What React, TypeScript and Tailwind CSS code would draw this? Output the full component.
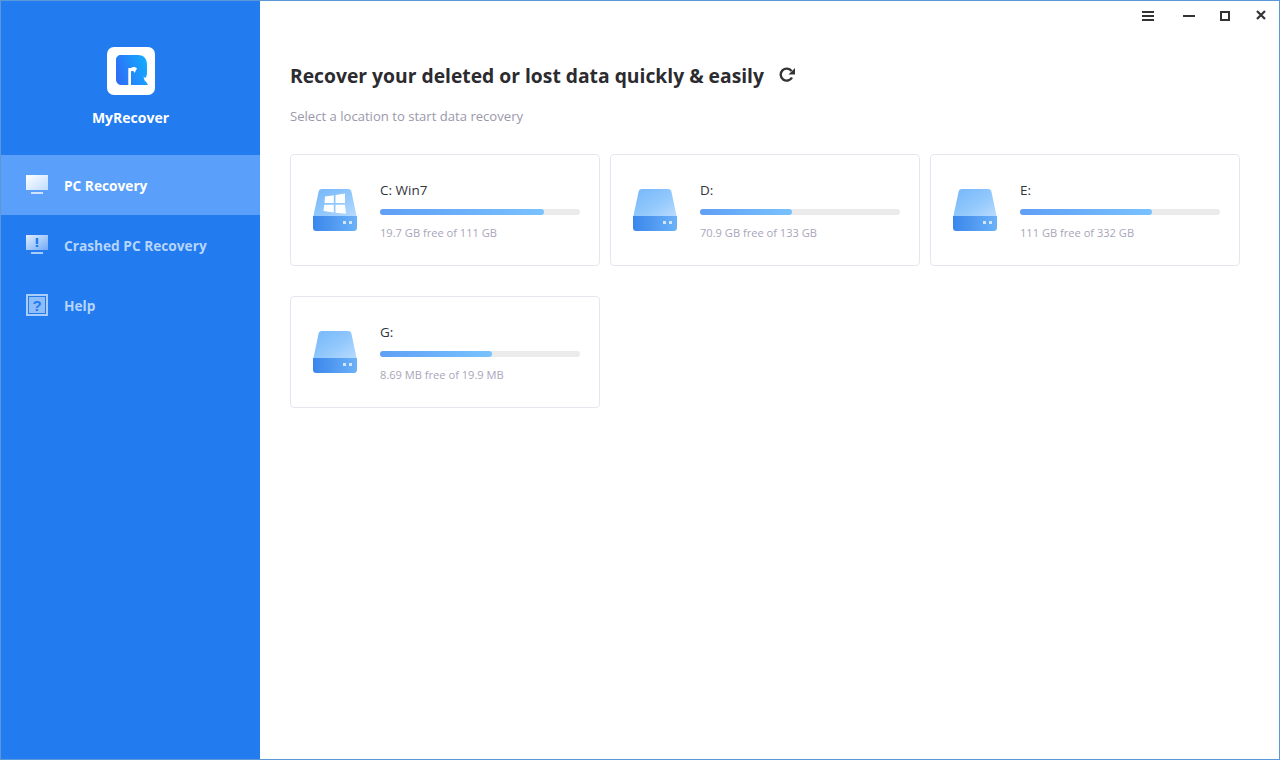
import { useId } from 'react';

const drives = [
  { name: 'C: Win7', free: '19.7 GB free of 111 GB', used: 82, windows: true },
  { name: 'D:', free: '70.9 GB free of 133 GB', used: 46, windows: false },
  { name: 'E:', free: '111 GB free of 332 GB', used: 66, windows: false },
  { name: 'G:', free: '8.69 MB free of 19.9 MB', used: 56, windows: false },
];

function Logo() {
  const id = useId();
  return (
    <svg width="48" height="48" viewBox="0 0 48 48">
      <defs>
        <linearGradient id={id} x1="0" y1="0.7" x2="1" y2="0.4">
          <stop offset="0" stopColor="#2f6cf6" />
          <stop offset="1" stopColor="#14aaff" />
        </linearGradient>
      </defs>
      <rect width="48" height="48" rx="7" fill="#fff" />
      <path
        d="M14 8H31C37 8 40 12 40 18V26C40 28.500 39 30.500 37.500 32L41 38H24V21H21.300V38H15C11.500 38 9 36 9 32.500V13C9 10 11 8 14 8Z"
        fill={`url(#${id})`}
      />
      <path d="M24 21C25.500 19.500 28.500 19.500 30 21.500L27.500 26C27 24 25.500 23.500 24 24.500Z" fill="#fff" />
      <path d="M36.500 29.500L41 33.500L38 34.500Z" fill="#fff" />
    </svg>
  );
}

function NavIcon({ type, active }: { type: string; active: boolean }) {
  const id = useId();
  const from = active ? '#ffffff' : '#e2eeff';
  const to = active ? '#bfdcff' : '#6fa9f7';
  if (type === 'help') {
    return (
      <svg width="22" height="22" viewBox="0 0 22 22">
        <rect x="0" y="0" width="22" height="22" fill="#a9cdfb" />
        <rect x="2" y="2" width="18" height="18" fill="#237bf0" />
        <rect x="3" y="3" width="16" height="16" fill="#8fbdf9" />
        <text x="11" y="17" textAnchor="middle" fontSize="15" fontWeight="700" fontFamily="Liberation Sans, sans-serif" fill="#237bf0">?</text>
      </svg>
    );
  }
  return (
    <svg width="22" height="20" viewBox="0 0 22 20">
      <defs>
        <linearGradient id={id} x1="0" y1="0" x2="1" y2="1">
          <stop offset="0" stopColor={from} />
          <stop offset="1" stopColor={to} />
        </linearGradient>
      </defs>
      <rect x="0" y="0" width="22" height="15" fill={`url(#${id})`} />
      <rect x="5" y="17" width="12" height="2" fill={active ? '#cfe3fe' : '#a9cdfb'} />
      {type === 'crash' && <path d="M9.800 3H12.200V9H9.800ZM9.800 10H12.200V12H9.800Z" fill="#237bf0" />}
    </svg>
  );
}

function DriveIcon({ windows }: { windows: boolean }) {
  const top = useId();
  const bottom = useId();
  return (
    <svg width="44" height="42" viewBox="0 0 44 42">
      <defs>
        <linearGradient id={top} x1="0" y1="0" x2="1" y2="1">
          <stop offset="0" stopColor="#74b6fa" />
          <stop offset="0.55" stopColor="#93c9fc" />
          <stop offset="1" stopColor="#bcdcfe" />
        </linearGradient>
        <linearGradient id={bottom} x1="0" y1="0" x2="1" y2="0">
          <stop offset="0" stopColor="#3b86ec" />
          <stop offset="1" stopColor="#6bb2f8" />
        </linearGradient>
      </defs>
      <path d="M5.500 3C5.800 1.200 7 0 9 0H35C37 0 38.200 1.200 38.500 3L44 29H0Z" fill={`url(#${top})`} />
      <path d="M0 27H44V39C44 40.700 42.700 42 41 42H3C1.300 42 0 40.700 0 39Z" fill={`url(#${bottom})`} />
      <rect x="30" y="32" width="3" height="3" fill="#d0e6fe" />
      <rect x="36" y="32" width="3" height="3" fill="#d0e6fe" />
      {windows && (
        <path
          d="M12 7.500L20.800 6.300V14H11.500ZM22.500 6L32 4.500V14H22.500ZM11.300 15.700H20.800V23.500L10.500 22ZM22.500 15.700H32L33 24.800L22.500 23.700Z"
          fill="#fff"
        />
      )}
    </svg>
  );
}

function DriveCard({ name, free, used, windows }: (typeof drives)[number]) {
  return (
    <div className="flex h-[112px] w-[310px] items-center rounded border border-[#e4e7ef] bg-white pl-[22px]">
      <DriveIcon windows={windows} />
      <div className="ml-[23px] w-[200px]">
        <div className="pt-px text-[13.500px] leading-[20px] text-[#33333b]">{name}</div>
        <div className="mt-[9px] h-1.5 rounded-full bg-[#ebebeb]">
          <div
            className="h-1.5 rounded-full bg-gradient-to-r from-[#5f9ff5] to-[#79c2fe]"
            style={{ width: `${used}%` }}
          />
        </div>
        <div className="mt-[9px] text-[11.100px] leading-[18px] text-[#a9a5bb]">{free}</div>
      </div>
    </div>
  );
}

export default function App() {
  const nav = [
    { label: 'PC Recovery', type: 'pc' },
    { label: 'Crashed PC Recovery', type: 'crash' },
    { label: 'Help', type: 'help' },
  ];

  return (
    <div className="flex h-[760px] border border-[#5b98d8] bg-white font-['Open_Sans',sans-serif]">
      <aside className="w-[259px] shrink-0 bg-[#237bf0]">
        <div className="flex flex-col items-center pt-[46px]">
          <Logo />
          <div className="mt-[13px] text-[14px] leading-[20px] font-bold text-white">MyRecover</div>
        </div>
        <nav className="mt-[27px]">
          {nav.map((item, index) => (
            <div
              key={item.label}
              className={`flex h-[60px] items-center pl-[25px] ${index === 0 ? 'bg-[#5a9ffa]' : ''}`}
            >
              <div className="flex w-[22px] justify-center">
                <NavIcon type={item.type} active={index === 0} />
              </div>
              <span className={`mt-[2px] ml-4 text-[13.700px] font-bold ${index === 0 ? 'text-white' : 'text-[#b5d5fc]'}`}>
                {item.label}
              </span>
            </div>
          ))}
        </nav>
      </aside>

      <main className="min-w-0 flex-1">
        <div className="flex h-[29px] items-center justify-end pr-[13px] text-[#333]">
          <svg width="12" height="10" viewBox="0 0 12 10"><path d="M0 0H12V2H0ZM0 4H12V6H0ZM0 8H12V10H0Z" fill="currentColor" /></svg>
          <svg className="ml-[29px]" width="12" height="2" viewBox="0 0 12 2"><path d="M0 0H12V2H0Z" fill="currentColor" /></svg>
          <svg className="ml-[25px]" width="10" height="10" viewBox="0 0 10 10"><path d="M1 1H9V9H1Z" fill="none" stroke="currentColor" strokeWidth="2" /></svg>
          <svg className="mb-[2px] ml-[26px]" width="10" height="10" viewBox="0 0 10 10"><path d="M1 1L9 9M9 1L1 9" stroke="currentColor" strokeWidth="2.200" /></svg>
        </div>

        <div className="pl-[30px]">
          <div className="mt-[32px] flex items-center">
            <h1 className="text-[19.300px] leading-[28px] font-bold text-[#2b2b30]">Recover your deleted or lost data quickly &amp; easily</h1>
            <svg className="mb-[5px] ml-[14px]" width="18" height="16" viewBox="0 0 18 16" fill="none" stroke="#333" strokeWidth="2.400">
              <path d="M14 11.500A6 6 0 1 1 13.500 5" />
              <path d="M17 2V8.500H10.500Z" fill="#333" stroke="none" />
            </svg>
          </div>
          <p className="mt-[16px] text-[13.100px] leading-[20px] text-[#9a98ab]">Select a location to start data recovery</p>

          <div className="mt-[28px] flex w-[960px] flex-wrap gap-x-[10px] gap-y-[30px]">
            {drives.map((drive) => (
              <DriveCard key={drive.name} {...drive} />
            ))}
          </div>
        </div>
      </main>
    </div>
  );
}
